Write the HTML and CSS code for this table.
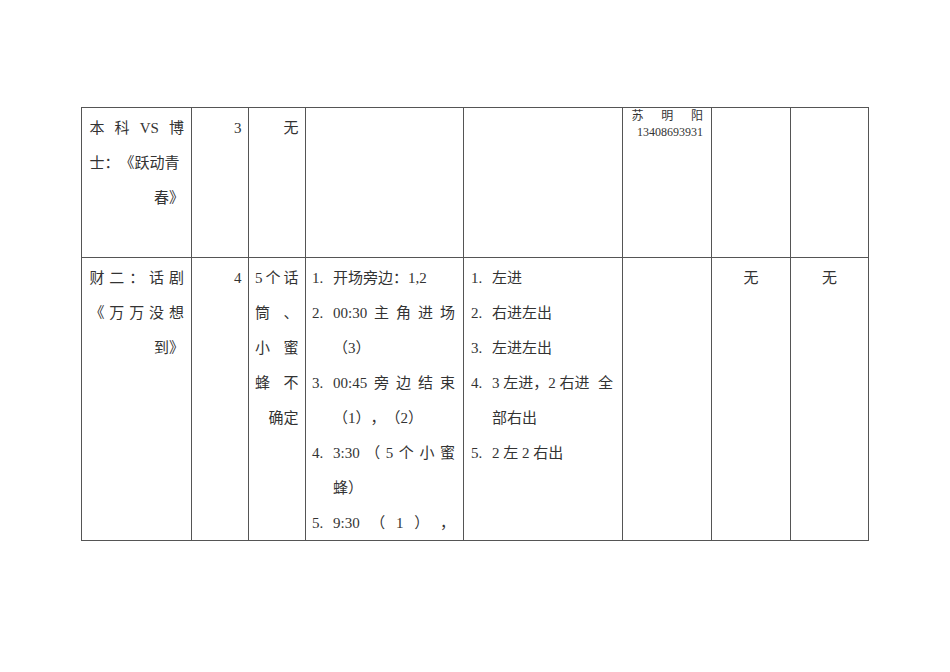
FILE: index.html
```html
<!DOCTYPE html>
<html lang="zh-CN">
<head>
<meta charset="utf-8">
<title>节目表</title>
<link rel="stylesheet" href="styles.css">
</head>
<body>
<div class="sheet">
  <!-- row 1 -->
  <div class="cell c1">
    <div class="ln dist"><span>本</span><span>科</span><span>VS</span><span>博</span></div>
    <div class="ln">士：《跃动青</div>
    <div class="ln right">春》</div>
  </div>
  <div class="cell c2"><div class="ln right">3</div></div>
  <div class="cell c3"><div class="ln right">无</div></div>
  <div class="cell c4"></div>
  <div class="cell c5"></div>
  <div class="cell c6 small">
    <div class="sl dist"><span>苏</span><span>明</span><span>阳</span></div>
    <div class="sl right">13408693931</div>
  </div>
  <div class="cell c7"></div>
  <div class="cell c8"></div>

  <!-- row 2 -->
  <div class="cell c1">
    <div class="ln dist"><span>财</span><span>二</span><span>：</span><span>话</span><span>剧</span></div>
    <div class="ln dist"><span>《</span><span>万</span><span>万</span><span>没</span><span>想</span></div>
    <div class="ln right">到》</div>
  </div>
  <div class="cell c2"><div class="ln right">4</div></div>
  <div class="cell c3">
    <div class="ln dist"><span>5</span><span>个</span><span>话</span></div>
    <div class="ln dist"><span>筒</span><span>、</span></div>
    <div class="ln dist"><span>小</span><span>蜜</span></div>
    <div class="ln dist"><span>蜂</span><span>不</span></div>
    <div class="ln right">确定</div>
  </div>
  <div class="cell c4">
    <div class="ln item"><span class="num">1.</span><span class="txt">开场旁边：1,2</span></div>
    <div class="ln item"><span class="num">2.</span><span class="txt dist"><span>00:30</span><span>主</span><span>角</span><span>进</span><span>场</span></span></div>
    <div class="ln indent">（3）</div>
    <div class="ln item"><span class="num">3.</span><span class="txt dist"><span>00:45</span><span>旁</span><span>边</span><span>结</span><span>束</span></span></div>
    <div class="ln indent">（1），（2）</div>
    <div class="ln item"><span class="num">4.</span><span class="txt dist"><span>3:30</span><span>（</span><span>5</span><span>个</span><span>小</span><span>蜜</span></span></div>
    <div class="ln indent">蜂）</div>
    <div class="ln item"><span class="num">5.</span><span class="txt dist"><span>9:30</span><span>（</span><span>1</span><span>）</span><span>，</span></span></div>
  </div>
  <div class="cell c5">
    <div class="ln item"><span class="num">1.</span><span class="txt">左进</span></div>
    <div class="ln item"><span class="num">2.</span><span class="txt">右进左出</span></div>
    <div class="ln item"><span class="num">3.</span><span class="txt">左进左出</span></div>
    <div class="ln item"><span class="num">4.</span><span class="txt dist"><span>3 左进，2 右进</span><span>全</span></span></div>
    <div class="ln indent">部右出</div>
    <div class="ln item"><span class="num">5.</span><span class="txt">2 左 2 右出</span></div>
  </div>
  <div class="cell c6"></div>
  <div class="cell c7"><div class="ln center">无</div></div>
  <div class="cell c8"><div class="ln center">无</div></div>
</div>
</body>
</html>
```

FILE: styles.css
```css
html, body {
  margin: 0;
  padding: 0;
  background: #ffffff;
}

body {
  font-family: "Liberation Serif", "Noto Sans CJK SC", serif;
  font-size: 15px;
  color: #333333;
  text-spacing-trim: space-all;
}

.sheet {
  display: grid;
  grid-template-columns: 110px 57px 57px 158px 159px 89px 79px 78px;
  grid-template-rows: 150px 283px;
  width: max-content;
  margin: 107px 0 0 81px;
  border-left: 1px solid #555555;
  border-top: 1px solid #555555;
}

.cell {
  box-sizing: border-box;
  border-right: 1px solid #555555;
  border-bottom: 1px solid #555555;
  padding: 3px 7px 0 7px;
  line-height: 35px;
  overflow: hidden;
  min-width: 0;
}

.c1 { padding-left: 7.5px; padding-right: 7px; }
.c2 { padding-right: 6.5px; }
.c3 { padding-left: 6px; padding-right: 6.5px; }
.c4 { padding-left: 6px; padding-right: 8px; }
.c5 { padding-left: 7px; padding-right: 9px; }

.small {
  font-size: 12px;
  line-height: 16px;
  padding: 0 8px 0 8.5px;
}

.ln {
  height: 35px;
  white-space: nowrap;
}

.sl {
  height: 16px;
  white-space: nowrap;
}

.dist {
  display: flex;
  justify-content: space-between;
}

.right { text-align: right; }
.center { text-align: center; }

.item {
  display: flex;
}

.num {
  flex: none;
  width: 21px;
}

.txt {
  flex: 1;
  min-width: 0;
}

.indent {
  padding-left: 21px;
}
```
